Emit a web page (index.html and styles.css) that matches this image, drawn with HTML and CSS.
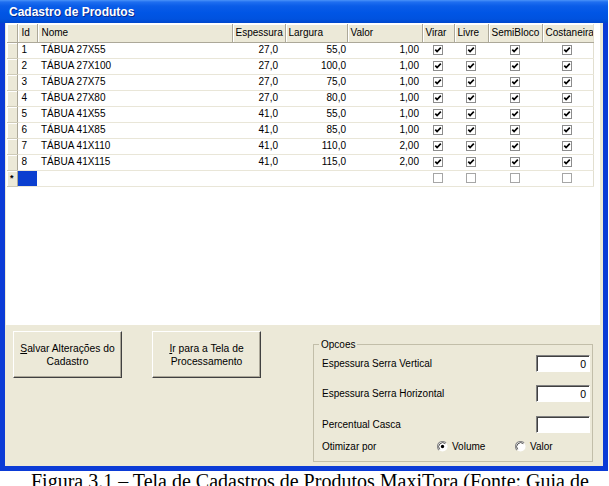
FILE: index.html
```html
<!DOCTYPE html>
<html lang="pt">
<head>
<meta charset="utf-8">
<title>Cadastro de Produtos</title>
<link rel="stylesheet" href="styles.css">
</head>
<body>
<svg class="defs" width="0" height="0" aria-hidden="true">
  <defs>
    <symbol id="chk" viewBox="0 0 10 10">
      <rect x="0.5" y="0.5" width="9" height="9" fill="#fff" stroke="#8c8c8c"/>
      <path d="M2.3 4.6 L4.1 6.5 L7.8 2.7" fill="none" stroke="#000" stroke-width="1.7"/>
    </symbol>
    <symbol id="box" viewBox="0 0 10 10">
      <rect x="0.5" y="0.5" width="9" height="9" fill="#fff" stroke="#a6a6a6"/>
    </symbol>
  </defs>
</svg>
<div class="window">
  <div class="titlebar"><span class="title">Cadastro de Produtos</span></div>
  <div class="frame">
    <div class="client">
      <div class="grid">
        <table class="sheet">
          <colgroup>
            <col class="c-sel"><col class="c-id"><col class="c-nome"><col class="c-esp"><col class="c-larg"><col class="c-val"><col class="c-virar"><col class="c-livre"><col class="c-semi"><col class="c-cost">
          </colgroup>
          <thead>
            <tr>
              <th class="sel"></th><th class="h-id">Id</th><th class="h-id">Nome</th><th>Espessura</th><th>Largura</th><th>Valor</th><th>Virar</th><th>Livre</th><th>SemiBloco</th><th class="last">Costaneira</th>
            </tr>
          </thead>
          <tbody>
            <tr><td class="sel"></td><td>1</td><td>TÁBUA 27X55</td><td class="n-esp">27,0</td><td class="n-larg">55,0</td><td class="n-val">1,00</td><td class="ck"><svg class="cb"><use href="#chk"/></svg></td><td class="ck"><svg class="cb"><use href="#chk"/></svg></td><td class="ck"><svg class="cb"><use href="#chk"/></svg></td><td class="ck last"><svg class="cb"><use href="#chk"/></svg></td></tr>
            <tr><td class="sel"></td><td>2</td><td>TÁBUA 27X100</td><td class="n-esp">27,0</td><td class="n-larg">100,0</td><td class="n-val">1,00</td><td class="ck"><svg class="cb"><use href="#chk"/></svg></td><td class="ck"><svg class="cb"><use href="#chk"/></svg></td><td class="ck"><svg class="cb"><use href="#chk"/></svg></td><td class="ck last"><svg class="cb"><use href="#chk"/></svg></td></tr>
            <tr><td class="sel"></td><td>3</td><td>TÁBUA 27X75</td><td class="n-esp">27,0</td><td class="n-larg">75,0</td><td class="n-val">1,00</td><td class="ck"><svg class="cb"><use href="#chk"/></svg></td><td class="ck"><svg class="cb"><use href="#chk"/></svg></td><td class="ck"><svg class="cb"><use href="#chk"/></svg></td><td class="ck last"><svg class="cb"><use href="#chk"/></svg></td></tr>
            <tr><td class="sel"></td><td>4</td><td>TÁBUA 27X80</td><td class="n-esp">27,0</td><td class="n-larg">80,0</td><td class="n-val">1,00</td><td class="ck"><svg class="cb"><use href="#chk"/></svg></td><td class="ck"><svg class="cb"><use href="#chk"/></svg></td><td class="ck"><svg class="cb"><use href="#chk"/></svg></td><td class="ck last"><svg class="cb"><use href="#chk"/></svg></td></tr>
            <tr><td class="sel"></td><td>5</td><td>TÁBUA 41X55</td><td class="n-esp">41,0</td><td class="n-larg">55,0</td><td class="n-val">1,00</td><td class="ck"><svg class="cb"><use href="#chk"/></svg></td><td class="ck"><svg class="cb"><use href="#chk"/></svg></td><td class="ck"><svg class="cb"><use href="#chk"/></svg></td><td class="ck last"><svg class="cb"><use href="#chk"/></svg></td></tr>
            <tr><td class="sel"></td><td>6</td><td>TÁBUA 41X85</td><td class="n-esp">41,0</td><td class="n-larg">85,0</td><td class="n-val">1,00</td><td class="ck"><svg class="cb"><use href="#chk"/></svg></td><td class="ck"><svg class="cb"><use href="#chk"/></svg></td><td class="ck"><svg class="cb"><use href="#chk"/></svg></td><td class="ck last"><svg class="cb"><use href="#chk"/></svg></td></tr>
            <tr><td class="sel"></td><td>7</td><td>TÁBUA 41X110</td><td class="n-esp">41,0</td><td class="n-larg">110,0</td><td class="n-val">2,00</td><td class="ck"><svg class="cb"><use href="#chk"/></svg></td><td class="ck"><svg class="cb"><use href="#chk"/></svg></td><td class="ck"><svg class="cb"><use href="#chk"/></svg></td><td class="ck last"><svg class="cb"><use href="#chk"/></svg></td></tr>
            <tr><td class="sel"></td><td>8</td><td>TÁBUA 41X115</td><td class="n-esp">41,0</td><td class="n-larg">115,0</td><td class="n-val">2,00</td><td class="ck"><svg class="cb"><use href="#chk"/></svg></td><td class="ck"><svg class="cb"><use href="#chk"/></svg></td><td class="ck"><svg class="cb"><use href="#chk"/></svg></td><td class="ck last"><svg class="cb"><use href="#chk"/></svg></td></tr>
            <tr class="new"><td class="sel star">*</td><td class="cur"></td><td></td><td></td><td></td><td></td><td class="ck"><svg class="cb"><use href="#box"/></svg></td><td class="ck"><svg class="cb"><use href="#box"/></svg></td><td class="ck"><svg class="cb"><use href="#box"/></svg></td><td class="ck last"><svg class="cb"><use href="#box"/></svg></td></tr>
          </tbody>
        </table>
      </div>
      <div class="form">
        <div class="buttons">
          <button class="btn" type="button"><u>S</u>alvar Alterações do<br>Cadastro</button>
          <button class="btn" type="button"><u>I</u>r para a Tela de<br>Processamento</button>
        </div>
        <fieldset class="options">
          <legend>Opcoes</legend>
          <div class="opt-row"><span>Espessura Serra Vertical</span><span class="textbox">0</span></div>
          <div class="opt-row gap13"><span>Espessura Serra Horizontal</span><span class="textbox">0</span></div>
          <div class="opt-row gap14"><span>Percentual Casca</span><span class="textbox"></span></div>
          <div class="radio-row">
            <span class="radio-label">Otimizar por</span>
            <span class="radio-opt first">
              <svg class="radio" viewBox="0 0 12 12"><circle cx="6" cy="6" r="5.5" fill="#fff"/><path d="M2.1 9.9 A5.5 5.5 0 0 1 9.9 2.1" fill="none" stroke="#8a8a8a" stroke-width="1.2"/><path d="M2.9 9.1 A4.4 4.4 0 0 1 9.1 2.9" fill="none" stroke="#404040" stroke-width="1"/><circle cx="6" cy="6" r="1.8" fill="#000"/></svg>
              <span>Volume</span>
            </span>
            <span class="radio-opt">
              <svg class="radio" viewBox="0 0 12 12"><circle cx="6" cy="6" r="5.5" fill="#fff"/><path d="M2.1 9.9 A5.5 5.5 0 0 1 9.9 2.1" fill="none" stroke="#8a8a8a" stroke-width="1.2"/><path d="M2.9 9.1 A4.4 4.4 0 0 1 9.1 2.9" fill="none" stroke="#404040" stroke-width="1"/></svg>
              <span>Valor</span>
            </span>
          </div>
        </fieldset>
      </div>
    </div>
  </div>
</div>
<p class="caption">Figura 3.1 – Tela de Cadastros de Produtos MaxiTora (Fonte: Guia de</p>
</body>
</html>
```
FILE: styles.css
```css
* { box-sizing: border-box; }
html, body { margin: 0; padding: 0; background: #fff; }
body {
  width: 609px;
  height: 486px;
  overflow: hidden;
  font-family: "Liberation Sans", Arial, sans-serif;
  font-size: 10px;
  color: #000;
}
.defs { position: absolute; width: 0; height: 0; }

.window { width: 608px; }

.titlebar {
  height: 23px;
  display: flex;
  align-items: center;
  padding-left: 9px;
  background: linear-gradient(to bottom, #4a93f8 0, #1f6ff0 2px, #0a5de8 6px, #0055e5 13px, #0052df 19px, #0047cc 23px);
}
.title {
  font-weight: bold;
  font-size: 12px;
  color: #fff;
  text-shadow: 1px 1px 0 #0a2a90;
}

.frame {
  border: 5px solid #0b3bd6;
  border-top: 0;
}
.client { background: #ece9d8; }

.grid {
  background: #fff;
  height: 302px;
  margin: 0 3px 0 1px;
  padding: 1px 0 0 1px;
}

.sheet {
  border-collapse: collapse;
  table-layout: fixed;
  width: 586px;
}
.c-sel { width: 10px; }
.c-id { width: 20px; }
.c-nome { width: 195px; }
.c-esp { width: 53px; }
.c-larg { width: 62px; }
.c-val { width: 75px; }
.c-virar { width: 32px; }
.c-livre { width: 34px; }
.c-semi { width: 54px; }
.c-cost { width: 51px; }

.sheet thead tr { height: 18px; }
.sheet th {
  font-weight: normal;
  text-align: left;
  padding: 0 0 0 3px;
  background: #ece9d8;
  border-right: 1px solid #aca899;
  border-bottom: 1px solid #aca899;
  box-shadow: inset 1px 1px 0 #fff;
  white-space: nowrap;
  overflow: hidden;
}
.sheet th.h-id { padding-left: 4px; }

.sheet tbody tr { height: 16px; }
.sheet td {
  padding: 0 0 0 4px;
  border-bottom: 1px solid #e9e6d8;
  white-space: nowrap;
  overflow: hidden;
  line-height: 14px;
}
.sheet .last { border-right: 1px solid #e2dfd0; }
.sheet td.sel {
  background: #ece9d8;
  padding: 0;
  border-right: 1px solid #aca899;
  border-bottom: 1px solid #cfcbb8;
  box-shadow: inset 1px 1px 0 #fff;
}
.sheet td.star {
  text-align: center;
  font-size: 9px;
  font-weight: bold;
}
.sheet td.cur { background: #0b3fd0; }

.sheet td.n-esp { text-align: right; padding: 0 7px 0 0; }
.sheet td.n-larg { text-align: right; padding: 0 1px 0 0; }
.sheet td.n-val { text-align: right; padding: 0 3px 0 0; }
.sheet td.ck { text-align: center; padding: 0; }
.cb { width: 10px; height: 10px; display: block; margin: 0 auto; }

.form {
  height: 141px;
  display: flex;
  align-items: flex-start;
  padding: 6px 0 0 8px;
}
.buttons { display: flex; gap: 30px; }
.btn {
  appearance: none;
  width: 109px;
  height: 47px;
  padding: 0;
  margin: 0;
  font-family: "Liberation Sans", Arial, sans-serif;
  font-size: 10.3px;
  line-height: 13px;
  color: #000;
  background: #ece9d8;
  border-top: 1px solid #fff;
  border-left: 1px solid #fff;
  border-right: 1px solid #404040;
  border-bottom: 1px solid #404040;
  box-shadow: inset -1px -1px 0 #aca899;
  border-radius: 0;
}

.options {
  margin: 7px 0 0 52px;
  width: 280px;
  min-width: 0;
  border: 1px solid #c2bea9;
  padding: 4px 2px 8px 8px;
}
.options legend {
  font-size: 10px;
  line-height: 13px;
  padding: 0 2px;
  margin-left: -3px;
}
.opt-row {
  display: flex;
  align-items: center;
  justify-content: space-between;
  height: 17px;
}
.gap13 { margin-top: 13px; }
.gap14 { margin-top: 14px; }
.textbox {
  width: 54px;
  height: 17px;
  background: #fff;
  border-top: 1px solid #808080;
  border-left: 1px solid #808080;
  border-right: 1px solid #fff;
  border-bottom: 1px solid #fff;
  box-shadow: inset 1px 1px 0 #404040;
  text-align: right;
  padding: 1px 3px 0 0;
  font-size: 10.5px;
  line-height: 14px;
}
.radio-row {
  display: flex;
  align-items: center;
  height: 13px;
  margin-top: 7px;
}
.radio-label { width: 115px; }
.radio-opt { display: flex; align-items: center; gap: 4px; }
.radio-opt.first { width: 78px; }
.radio { width: 11px; height: 11px; display: block; }

.caption {
  margin: 0;
  padding-left: 31px;
  font-family: "Liberation Serif", "Times New Roman", serif;
  font-size: 20px;
  line-height: 20px;
  white-space: nowrap;
}
```
